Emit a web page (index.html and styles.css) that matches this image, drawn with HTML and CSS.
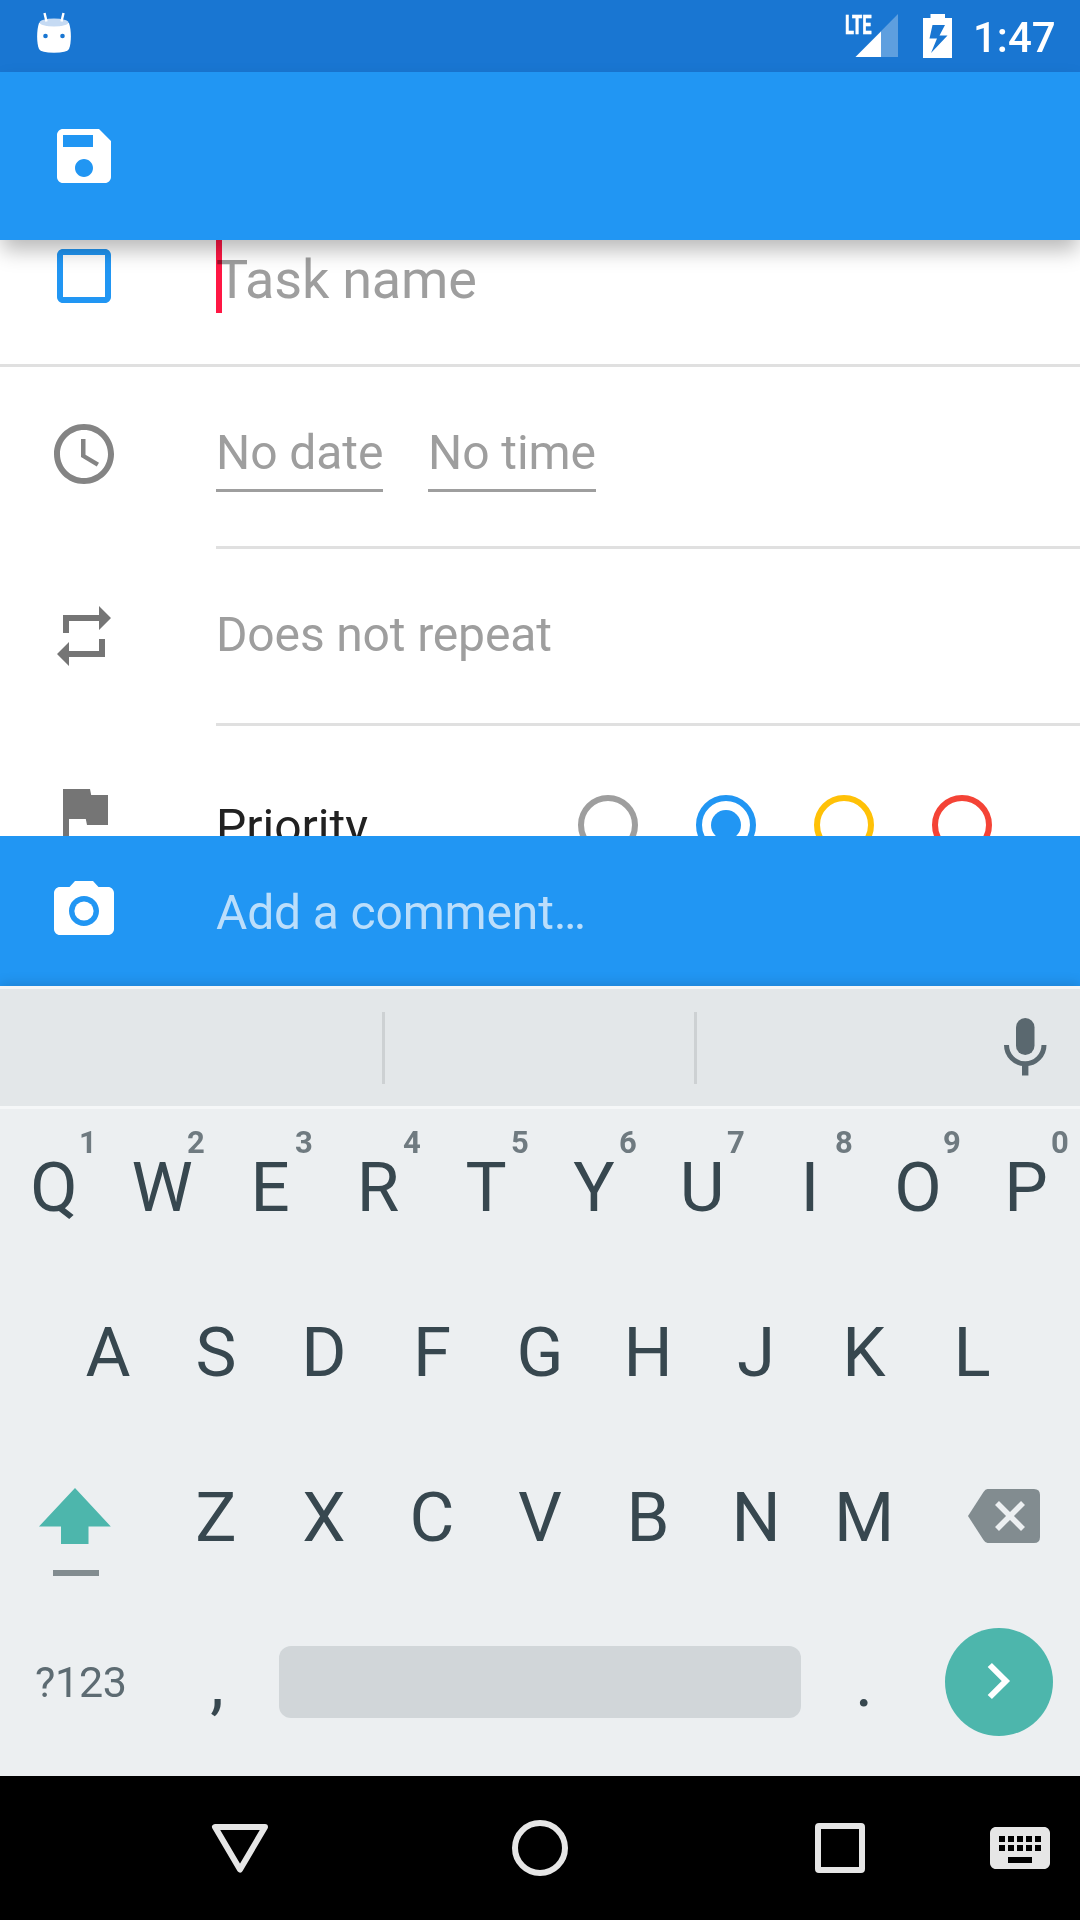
FILE: index.html
```html
<!DOCTYPE html>
<html lang="en">
<head>
<meta charset="utf-8">
<title>Task</title>
<link rel="stylesheet" href="styles.css">
</head>
<body>
<div class="screen">
  <header class="status">
    <svg class="status-left" width="36" height="44" viewBox="0 0 36 44">
      <path class="white" d="M3 12Q18 7 33 12C35.500 19 35.500 32 33 38Q31 41.800 18 41.800Q5 41.800 3 38C.5 32 .5 19 3 12Z"/>
      <ellipse cx="18" cy="11.500" rx="14.500" ry="4" fill="#c5daf3"/>
      <path d="M8.500 2L10.500 10.500M27.500 2L25.500 10.500" stroke="#fff" stroke-width="2.400"/>
      <circle cx="9.500" cy="25" r="2.300" fill="#1976d2"/><circle cx="26.500" cy="25" r="2.300" fill="#1976d2"/>
    </svg>
    <svg class="signal" width="54" height="44" viewBox="0 0 54 44">
      <path d="M53 0V43H10.500Z" fill="#fff" opacity=".3"/>
      <path class="white" d="M36 17.500V43H10.500Z"/>
      <text class="lte" x="0" y="19.500" textLength="26.500" lengthAdjust="spacingAndGlyphs">LTE</text>
    </svg>
    <svg class="battery" width="30" height="44" viewBox="0 0 30 44">
      <path class="white" fill-rule="evenodd" d="M7.500 0H22V4H29V44H0V4H7.500ZM9.500 11L6.500 24.500H14L8 39L24.500 21.500H16.500L22 11Z"/>
    </svg>
    <span class="time">1:47</span>
  </header>

  <div class="appbar">
    <svg class="icon white" viewBox="0 0 24 24"><path d="M17 3H5c-1.110 0-2 .9-2 2v14c0 1.100.89 2 2 2h14c1.100 0 2-.9 2-2V7l-4-4zm-5 16c-1.660 0-3-1.340-3-3s1.340-3 3-3 3 1.340 3 3-1.340 3-3 3zm3-10H5V5h10v4z"/></svg>
  </div>

  <main class="form">
    <div class="row row-name">
      <svg class="icon blue" viewBox="0 0 24 24"><path d="M19 5v14H5V5h14m0-2H5c-1.100 0-2 .9-2 2v14c0 1.100.9 2 2 2h14c1.100 0 2-.9 2-2V5c0-1.100-.9-2-2-2z"/></svg>
      <div class="name-field"><span class="caret"></span>Task name</div>
    </div>
    <div class="row row-date">
      <svg class="icon clock" viewBox="0 0 24 24"><path d="M11.990 2C6.470 2 2 6.480 2 12s4.470 10 9.990 10C17.520 22 22 17.520 22 12S17.520 2 11.990 2zM12 20c-4.420 0-8-3.580-8-8s3.580-8 8-8 8 3.580 8 8-3.580 8-8 8zm.5-13H11v6l5.250 3.150.75-1.230-4.500-2.670z"/></svg>
      <div class="dates"><span class="field date">No date</span><span class="field clocktime">No time</span></div>
    </div>
    <div class="row row-repeat">
      <svg class="icon grey" viewBox="0 0 24 24"><path d="M7 7h10v3l4-4-4-4v3H5v6h2V7zm10 10H7v-3l-4 4 4 4v-3h12v-6h-2v4z"/></svg>
      <div class="repeat">Does not repeat</div>
    </div>
    <div class="row row-priority">
      <svg class="icon grey" viewBox="0 0 24 24"><path d="M14.400 6L14 4H5v17h2v-7h5.600l.4 2h7V6z"/></svg>
      <div class="priority">Priority</div>
      <div class="radios">
        <span class="radio none"></span><span class="radio low on"></span><span class="radio medium"></span><span class="radio high"></span>
      </div>
    </div>
  </main>

  <div class="comment">
    <svg class="icon white" viewBox="0 0 24 24"><circle cx="12" cy="12" r="3.200"/><path d="M9 2L7.170 4H4c-1.100 0-2 .9-2 2v12c0 1.100.9 2 2 2h16c1.100 0 2-.9 2-2V6c0-1.100-.9-2-2-2h-3.170L15 2H9zm3 15c-2.760 0-5-2.240-5-5s2.240-5 5-5 5 2.240 5 5-2.240 5-5 5z"/></svg>
    <div class="comment-text">Add a comment…</div>
  </div>

  <section class="keyboard">
    <div class="suggestions">
      <span class="cell"></span><span class="cell"></span>
      <svg class="mic" width="44" height="60" viewBox="0 0 44 60"><rect x="13" y="1" width="18.500" height="37" rx="9.250" fill="#5a686f"/><path d="M3.500 28A18.750 18.750 0 0 0 41 28" fill="none" stroke="#5a686f" stroke-width="5"/><path d="M19 46H25.400V58.500H19Z" fill="#5a686f"/></svg>
    </div>
    <div class="keys">
      <div class="krow">
        <span class="key">Q<sup>1</sup></span><span class="key">W<sup>2</sup></span><span class="key">E<sup>3</sup></span><span class="key">R<sup>4</sup></span><span class="key">T<sup>5</sup></span><span class="key">Y<sup>6</sup></span><span class="key">U<sup>7</sup></span><span class="key">I<sup>8</sup></span><span class="key">O<sup>9</sup></span><span class="key">P<sup>0</sup></span>
      </div>
      <div class="krow">
        <span class="key">A</span><span class="key">S</span><span class="key">D</span><span class="key">F</span><span class="key">G</span><span class="key">H</span><span class="key">J</span><span class="key">K</span><span class="key">L</span>
      </div>
      <div class="krow">
        <svg class="shift" width="162" height="165" viewBox="0 0 162 165"><path d="M75 49L110.800 87.500H88.500V105H61V87.500H39Z" fill="#4db6ac"/><path d="M53 131H99V137H53Z" fill="#828c90"/></svg>
        <span class="key">Z</span><span class="key">X</span><span class="key">C</span><span class="key">V</span><span class="key">B</span><span class="key">N</span><span class="key">M</span>
        <svg class="delete" width="162" height="165" viewBox="0 0 162 165"><path d="M69.500 50H116Q122 50 122 56V98Q122 104 116 104H69.500Q67.500 104 65.500 101L50 77L65.500 53Q67.500 50 69.500 50Z" fill="#828c90"/><path d="M79 64L105 90M105 64L79 90" stroke="#eceff1" stroke-width="5.600"/></svg>
      </div>
      <div class="krow">
        <span class="symbols">?123</span>
        <span class="key comma">,</span>
        <span class="space"></span>
        <span class="key">.</span>
        <svg class="enter" width="108" height="108" viewBox="0 0 108 108"><circle cx="54" cy="54" r="54" fill="#4db6ac"/><path d="M44.800 37L60.800 53L44.800 69" fill="none" stroke="#fff" stroke-width="6"/></svg>
      </div>
    </div>
  </section>

  <nav class="navbar">
    <span class="nav"><svg width="60" height="60" viewBox="0 0 60 60"><path d="M5 9H55L30 51.500Z" fill="none" stroke="#e6e6e6" stroke-width="6" stroke-linejoin="round"/></svg></span>
    <span class="nav"><svg width="60" height="60" viewBox="0 0 60 60"><circle cx="30" cy="30" r="25" fill="none" stroke="#e6e6e6" stroke-width="6"/></svg></span>
    <span class="nav"><svg width="60" height="60" viewBox="0 0 60 60"><rect x="8" y="8" width="44" height="44" rx="1" fill="none" stroke="#e6e6e6" stroke-width="6"/></svg></span>
    <svg width="60" height="60" viewBox="2 2 20 20" fill="#e6e6e6"><path d="M20 5H4c-1.100 0-1.990.9-1.990 2L2 17c0 1.100.9 2 2 2h16c1.100 0 2-.9 2-2V7c0-1.100-.9-2-2-2zm-9 3h2v2h-2V8zm0 3h2v2h-2v-2zM8 8h2v2H8V8zm0 3h2v2H8v-2zm-1 2H5v-2h2v2zm0-3H5V8h2v2zm9 7H8v-2h8v2zm0-4h-2v-2h2v2zm0-3h-2V8h2v2zm3 3h-2v-2h2v2zm0-3h-2V8h2v2z"/></svg>
  </nav>
</div>
</body>
</html>
```
FILE: styles.css
```css
* { box-sizing: border-box; }
body { margin: 0; font-family: Roboto, "Liberation Sans", sans-serif; }
svg { display: block; flex: none; }
.screen { width: 1080px; height: 1920px; display: flex; flex-direction: column; overflow: hidden; background: #fff; white-space: nowrap; }

.white { fill: #fff; }
.blue { fill: #2196f3; }
.grey { fill: #757575; }
.clock { fill: #848484; }
.icon { width: 72px; height: 72px; margin: 0 96px 0 48px; }

.status { height: 72px; flex: none; display: flex; align-items: flex-start; background: #1976d2; padding: 0 27px 0 36px; }
.status-left { margin: 11px auto 0 0; }
.signal { margin: 14px 24px 0 0; overflow: visible; }
.lte { font: 700 26px Roboto, sans-serif; fill: #fff; stroke: #fff; stroke-width: .7px; }
.battery { margin: 14px 20px 0 0; }
.time { width: 80px; font-size: 42px; line-height: 75px; font-weight: 500; color: #fff; }

.appbar { height: 168px; flex: none; background: #2196f3; padding-top: 48px; position: relative; z-index: 1; box-shadow: 0 12px 20px -2px rgba(0,0,0,.28); }

.form { height: 596px; flex: none; overflow: hidden; letter-spacing: -.15px; }
.row { display: flex; align-items: flex-start; position: relative; }
.row-name { height: 127px; border-bottom: 3px solid #e0e0e0; }
.row-date { height: 182px; padding-top: 51px; }
.row-repeat { height: 177px; padding-top: 51px; }
.row-date::after, .row-repeat::after { content: ""; position: absolute; left: 216px; right: 0; bottom: 0; height: 3px; background: #e0e0e0; }
.row-priority { height: 177px; padding-top: 51px; }
.name-field { font-size: 54px; line-height: 80px; letter-spacing: -.2px; color: #9e9e9e; position: relative; }
.caret { position: absolute; left: 0; top: 0; width: 6px; height: 73px; background: #ff1744; mix-blend-mode: multiply; }
.dates { display: flex; gap: 45px; margin-top: -1px; letter-spacing: -.08px; }
.field { font-size: 48px; line-height: 72px; height: 75px; color: #9e9e9e; border-bottom: 3px solid #9e9e9e; }
.date { width: 167px; }
.clocktime { width: 168px; }
.repeat { font-size: 48px; line-height: 72px; color: #9e9e9e; margin-top: -1px; }
.priority { width: 362px; font-size: 48px; line-height: 72px; letter-spacing: 0; color: #212121; margin-top: 14px; }
.radios { display: flex; gap: 58px; margin-top: 18px; }
.radio { width: 60px; height: 60px; border: 6px solid currentColor; border-radius: 50%; display: grid; place-items: center; }
.on::after { content: ""; width: 30px; height: 30px; border-radius: 50%; background: currentColor; }
.none { color: #9e9e9e; }
.low { color: #2196f3; }
.medium { color: #ffc107; }
.high { color: #f44336; }

.comment { height: 150px; flex: none; display: flex; align-items: flex-start; padding-top: 39px; background: #2196f3; }
.comment-text { font-size: 48px; line-height: 72px; letter-spacing: -.15px; color: #bbdefb; margin-top: 2px; }

.keyboard { height: 790px; flex: none; background: #eceff1; position: relative; box-shadow: 0 -2px 12px rgba(0,0,0,.14); }
.suggestions { height: 123px; display: flex; align-items: center; background: #e3e7e9; border-top: 3px solid #f3f5f6; border-bottom: 3px solid #f5f7f8; padding-left: 73px; }
.cell { width: 312px; height: 72px; border-right: 3px solid #cdd1d3; }
.mic { margin: 0 0 1px 306px; }
.keys { display: flex; flex-direction: column; }
.krow { height: 165px; display: flex; justify-content: center; }
.key { width: 108px; text-align: center; font-size: 69px; line-height: 157px; color: #37474f; position: relative; }
.key sup { position: absolute; left: 68px; top: 14px; width: 40px; font-size: 31px; line-height: 40px; font-weight: 700; color: #6f7a80; }
.comma { padding-left: 2px; }
.symbols { width: 162px; padding-left: 35px; font-size: 43px; line-height: 157px; letter-spacing: -.3px; color: #5d6b72; }
.space { width: 522px; height: 72px; margin: 42px 9px 0; border-radius: 12px; background: #d1d6d9; }
.enter { margin: 24px 27px 0; }

.navbar { height: 144px; flex: none; background: #000; display: flex; align-items: center; padding-left: 90px; }
.nav { width: 300px; display: flex; justify-content: center; }
```
